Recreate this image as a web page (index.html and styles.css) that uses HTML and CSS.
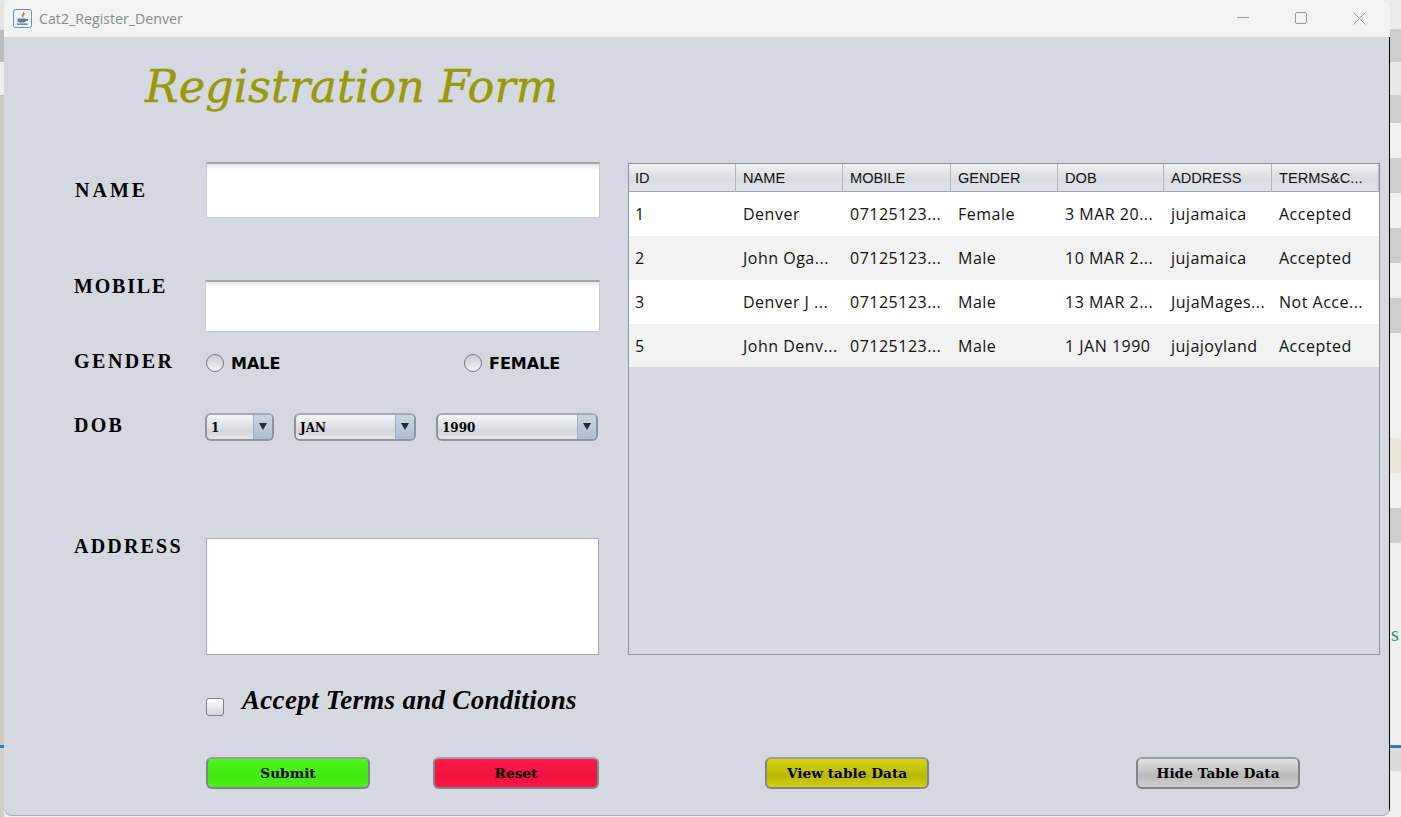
FILE: index.html
```html
<!DOCTYPE html>
<html lang="en">
<head>
  <meta charset="UTF-8"/>
  <meta name="viewport" content="width=device-width,initial-scale=1.0"/>
  <title>Cat2_Register_Denver</title>
  <link rel="stylesheet" href="styles.css">
</head>
<body>

  <!-- BEHIND THE WINDOW (left edge) -->
  <div class="strip strip-left">
    <div class="s-top"></div>
    <div class="s-dark"></div>
    <div class="s-box"></div>
    <div class="s-rest"></div>
    <div class="s-blue"></div>
    <div class="s-end"></div>
  </div>

  <div class="window">
    <!-- TITLE BAR -->
    <header class="titlebar">
      <svg class="app-icon" width="19" height="19" viewBox="0 0 19 19">
        <rect x=".5" y=".5" width="18" height="18" rx="2" fill="#f0f4f9" stroke="#6d8fb0"/>
        <path d="M10 2.500c1.200 1.800-2 2.800-1.200 5 .3.900 1.200 1.200 1.700 1.200-.7-1.100.1-1.700.9-2.800.6-.9.200-2.300-1.400-3.400z" fill="#e8762b"/>
        <path d="M4.500 9.500h8.500v1.800c0 1.500-1.100 2.200-2.200 2.200h-4.100c-1.100 0-2.200-.7-2.200-2.200z" fill="#5b7fa3"/>
        <path d="M13 10h2v1.800h-2zM4 14.500h10.500v1.200h-10.500z" fill="#4a6b8c"/>
      </svg>
      <span class="app-title">Cat2_Register_Denver</span>
      <div class="win-buttons">
        <svg width="13" height="13" viewBox="0 0 13 13"><path d="M0 5.500h12" stroke="#999" fill="none"/></svg>
        <svg width="13" height="13" viewBox="0 0 13 13"><rect x=".5" y=".5" width="11" height="11" rx="1.500" stroke="#999" fill="none"/></svg>
        <svg width="13" height="13" viewBox="0 0 13 13"><path d="M.5.500l12 12M12.500.500l-12 12" stroke="#999" fill="none"/></svg>
      </div>
    </header>

    <div class="content">
      <h1 class="form-title">Registration Form</h1>

      <div class="panels">
        <!-- FORM -->
        <form class="reg-form">
          <div class="row row-name">
            <label class="field-label">NAME</label>
            <input type="text" class="text-field"/>
          </div>
          <div class="row row-mobile">
            <label class="field-label">MOBILE</label>
            <input type="text" class="text-field"/>
          </div>
          <div class="row row-gender">
            <label class="field-label">GENDER</label>
            <div class="gender-opts">
              <label class="radio-opt"><input type="radio" name="gender"/>MALE</label>
              <label class="radio-opt"><input type="radio" name="gender"/>FEMALE</label>
            </div>
          </div>
          <div class="row row-dob">
            <label class="field-label">DOB</label>
            <div class="combos">
              <div class="combo combo-day"><span>1</span><i class="arrow"></i></div>
              <div class="combo combo-month"><span>JAN</span><i class="arrow"></i></div>
              <div class="combo combo-year"><span>1990</span><i class="arrow"></i></div>
            </div>
          </div>
          <div class="row row-address">
            <label class="field-label">ADDRESS</label>
            <textarea class="text-area"></textarea>
          </div>
          <div class="row row-terms">
            <span></span>
            <label class="terms"><input type="checkbox"/><span>Accept Terms and Conditions</span></label>
          </div>
        </form>

        <!-- TABLE -->
        <div class="table-panel">
          <table>
            <thead>
              <tr>
                <th>ID</th><th>NAME</th><th>MOBILE</th><th>GENDER</th>
                <th>DOB</th><th>ADDRESS</th><th>TERMS&amp;C...</th>
              </tr>
            </thead>
            <tbody>
              <tr><td>1</td><td>Denver</td><td>07125123...</td><td>Female</td><td>3 MAR 20...</td><td>jujamaica</td><td>Accepted</td></tr>
              <tr><td>2</td><td>John Oga...</td><td>07125123...</td><td>Male</td><td>10 MAR 2...</td><td>jujamaica</td><td>Accepted</td></tr>
              <tr><td>3</td><td>Denver J ...</td><td>07125123...</td><td>Male</td><td>13 MAR 2...</td><td>JujaMages...</td><td>Not Acce...</td></tr>
              <tr><td>5</td><td>John Denv...</td><td>07125123...</td><td>Male</td><td>1 JAN 1990</td><td>jujajoyland</td><td>Accepted</td></tr>
            </tbody>
          </table>
        </div>
      </div>

      <!-- BUTTONS -->
      <div class="actions">
        <button type="button" class="btn btn-green">Submit</button>
        <button type="button" class="btn btn-red">Reset</button>
        <button type="button" class="btn btn-yellow">View table Data</button>
        <button type="button" class="btn btn-grey">Hide Table Data</button>
      </div>
    </div>
  </div>

  <!-- BEHIND THE WINDOW (right edge) -->
  <div class="strip strip-right">
    <div class="r-light h-29"></div>
    <div class="r-grey h-33"></div>
    <div class="r-mid h-33"></div>
    <div class="r-grey h-28"></div>
    <div class="r-pale h-35"></div>
    <div class="r-grey h-35"></div>
    <div class="r-pale h-35"></div>
    <div class="r-grey h-35"></div>
    <div class="r-pale h-35"></div>
    <div class="r-grey h-35"></div>
    <div class="r-pale h-105"></div>
    <div class="r-note h-35"></div>
    <div class="r-pale h-35"></div>
    <div class="r-grey h-35"></div>
    <div class="r-text">s</div>
    <div class="r-blue"></div>
    <div class="r-end"></div>
  </div>

</body>
</html>
```

FILE: styles.css
```css
html, body { height:100%; }
body { margin:0; display:flex; height:817px; overflow:hidden; background:#f0f0f0; font-family:"Liberation Serif", serif; }

/* strips of whatever is behind the window */
.strip { flex:none; display:flex; flex-direction:column; overflow:hidden; }
.strip-left { width:4px; background:#e6e6e6; }
.s-top { height:30px; background:#e4e4e4; }
.s-dark { height:32px; background:#bdbdbd; }
.s-box { height:33px; background:#efefef; border-bottom:1px solid #bbb; }
.s-rest { height:649px; background:#cbcac2; }
.s-blue { height:3px; background:#3a78b5; }
.s-end { flex:1; background:#cfcec8; }

.strip-right { width:11px; background:#efefef; }
.h-28 { height:28px; }
.h-29 { height:29px; }
.h-33 { height:33px; }
.h-35 { height:35px; }
.h-105 { height:105px; }
.r-light { background:#ececec; }
.r-grey { background:#cdcdcd; }
.r-mid { background:#e8e8e8; }
.r-pale { background:#f1f1f1; }
.r-note { background:#e9e6d8; }
.r-text { height:22px; margin-top:80px; padding-left:1px; font-size:20px; line-height:22px; color:#2a9a6e; }
.r-blue { height:3px; margin-top:100px; background:#3a78b5; }
.r-end { height:23px; background:#dadada; }

/* window */
.window { flex:none; width:1386px; height:816px; display:flex; flex-direction:column; background:#d5d8e1; border-radius:8px; overflow:hidden; box-shadow:inset 0 -1px 0 #a9abb0; }
.titlebar { flex:none; height:37px; display:flex; align-items:center; padding-left:9px; background:#f3f3f3; }
.app-icon { flex:none; margin-top:-1px; }
.app-title { margin-left:7px; font-family:"Open Sans", sans-serif; font-size:14.200px; color:#8b8b8b; }
.win-buttons { margin-left:auto; display:flex; gap:45px; padding-right:24px; }

.content { flex:1; display:flex; flex-direction:column; border-right:1px solid #000; }
.form-title { margin:0; height:125px; padding:20px 0 0 141px; box-sizing:border-box; font-family:"DejaVu Serif", serif; font-style:italic; font-weight:normal; font-size:44.700px; line-height:60px; color:#999900; -webkit-text-stroke:.4px #999900; }

.panels { display:flex; }
.reg-form { width:526px; margin-left:70px; flex:none; }

.row { display:grid; grid-template-columns:132px 1fr; align-items:center; }
.row-name { height:56px; margin-left:1px; grid-template-columns:131px 1fr; }
.row-mobile { height:52px; margin-top:62px; align-items:start; grid-template-columns:131px 1fr; }
.row-gender { height:24px; margin-top:19px; }
.row-dob { height:28px; margin-top:38px; }
.row-address { height:117px; margin-top:97px; align-items:start; }
.row-terms { height:18px; margin-top:43px; grid-template-rows:18px; }

.field-label { font-size:20px; font-weight:bold; letter-spacing:2.200px; color:#000; line-height:24px; }
.row-name .field-label { letter-spacing:3px; }
.row-mobile .field-label { margin-top:-6px; letter-spacing:1.800px; }
.row-dob .field-label { margin-top:-4px; }
.row-gender .field-label { margin-top:-4px; letter-spacing:2.500px; }
.row-address .field-label { margin-top:-4px; }

.text-field { width:100%; height:100%; box-sizing:border-box; padding:0; border:1px solid #c9ccd3; border-top:2px solid #a6a8ad; outline:none; background:linear-gradient(#e6e6e6, #fff 6px); }
.text-area { display:block; width:393px; height:117px; box-sizing:border-box; margin:0; padding:0; border:1px solid #a8abb5; background:#fff; resize:none; outline:none; }

.gender-opts { display:flex; }
.radio-opt { display:flex; align-items:center; gap:7px; font-family:"DejaVu Sans", sans-serif; font-weight:bold; font-size:16px; color:#000; }
.radio-opt:first-child { width:258px; }
.radio-opt input { appearance:none; margin:0; width:18px; height:18px; flex:none; border:1px solid #777b85; border-radius:50%; background:linear-gradient(#c9ccd2, #f2f3f5); box-sizing:border-box; }

.combos { display:flex; gap:20px; margin-left:-1px; }
.combo { display:flex; height:28px; box-sizing:border-box; border:2px solid #8e939e; border-top-color:#a4a8b2; border-radius:6px; background:linear-gradient(#f5f6f8, #d3d6dd 70%, #e4e6eb); overflow:hidden; font-family:"DejaVu Serif", serif; font-weight:bold; font-size:12px; line-height:27px; color:#000; }
.combo span { flex:1; padding-left:4px; }
.arrow { flex:none; width:18px; position:relative; background:linear-gradient(#c9d6e2, #a9bed1); border-left:1px solid #a3afbd; }
.arrow::after { content:""; position:absolute; left:5px; top:8px; border:4px solid transparent; border-top:7px solid #222a33; border-bottom:0; }
.combo-day { width:69px; }
.combo-month { width:122px; }
.combo-year { width:162px; }

.terms { display:flex; align-items:center; height:18px; white-space:nowrap; font-family:"Liberation Serif", serif; font-style:italic; font-weight:bold; font-size:27px; letter-spacing:.3px; color:#000; }
.terms input { appearance:none; margin:0 18px 0 0; width:18px; height:18px; flex:none; box-sizing:border-box; border:1px solid #7c808a; border-radius:3px; background:linear-gradient(#fff, #d3d5da); }
.terms span { line-height:18px; margin-bottom:14px; }

.table-panel { width:752px; height:492px; margin:1px 0 0 28px; box-sizing:border-box; border:1px solid #8f939d; background:#d5d8e1; }
table { width:100%; table-layout:fixed; border-collapse:separate; border-spacing:0; }
th { height:28px; padding:1px 0 0 7px; box-sizing:border-box; text-align:left; font-family:"Liberation Sans", sans-serif; font-weight:normal; font-size:14.600px; color:#111; background:linear-gradient(#f2f3f6, #d9dbe3 55%, #e0e2e9); border-right:1px solid #b4b7c0; border-bottom:1px solid #9ea2ad; }
td { height:44px; padding:0 0 0 7px; box-sizing:border-box; font-family:"Open Sans", sans-serif; font-size:16px; letter-spacing:.5px; color:#111; white-space:nowrap; overflow:hidden; }
th:nth-child(1) { width:107px; padding-left:6px; }
td:nth-child(1) { padding-left:6px; }
th:nth-child(2) { width:107px; }
th:nth-child(3) { width:108px; }
th:nth-child(4) { width:107px; }
th:nth-child(5) { width:106px; }
th:nth-child(6) { width:108px; }
th:nth-child(7) { width:107px; }
tbody tr:nth-child(odd) { background:#fff; }
tbody tr:nth-child(even) { background:#f2f2f2; }
tbody tr:last-child td { height:43px; padding-top:1px; }

.actions { display:flex; margin:41px 0 0 202px; }
.btn { height:32px; box-sizing:border-box; padding:0; border:2px solid #7f838c; border-top-color:#9a9da5; border-radius:6px; font-family:"DejaVu Serif", serif; font-weight:bold; font-size:13.700px; color:#000; }
.btn-green { width:164px; background:linear-gradient(#4df81c, #42e813 60%, #4bf218); }
.btn-red { width:166px; margin-left:63px; background:linear-gradient(#ff1a48, #f01240 60%, #ff1646); }
.btn-yellow { width:164px; margin-left:166px; background:linear-gradient(#d5d50f, #b9b904 60%, #d0d00c); }
.btn-grey { width:164px; margin-left:207px; background:linear-gradient(#e2e2e2, #b9b9b9 60%, #cfcfcf); }
```
